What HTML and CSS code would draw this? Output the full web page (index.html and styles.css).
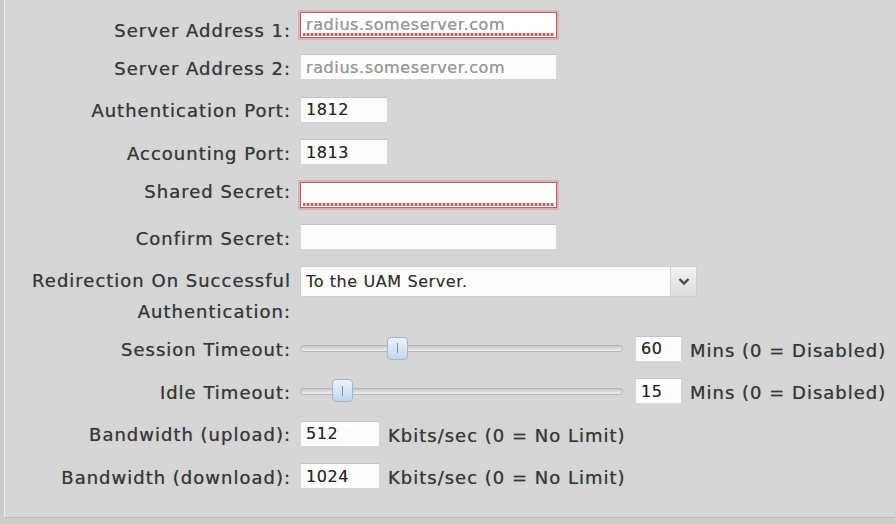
FILE: index.html
```html
<!DOCTYPE html>
<html lang="en">
<head>
  <meta charset="UTF-8">
  <title>RADIUS Settings</title>
  <link rel="stylesheet" href="styles.css">
</head>
<body>

  <div class="panel">
    <form class="form">
      <!-- Servers -->
      <div class="row row-first">
        <label class="label" for="server1">Server Address 1:</label>
        <div class="control">
          <input class="field field-wide field-error" id="server1" type="text" placeholder="radius.someserver.com">
        </div>
      </div>
      <div class="row">
        <label class="label" for="server2">Server Address 2:</label>
        <div class="control">
          <input class="field field-wide" id="server2" type="text" placeholder="radius.someserver.com">
        </div>
      </div>

      <!-- Ports -->
      <div class="row">
        <label class="label" for="authPort">Authentication Port:</label>
        <div class="control">
          <input class="field field-port" id="authPort" type="text" value="1812">
        </div>
      </div>
      <div class="row">
        <label class="label" for="acctPort">Accounting Port:</label>
        <div class="control">
          <input class="field field-port" id="acctPort" type="text" value="1813">
        </div>
      </div>

      <!-- Secret -->
      <div class="row row-secret">
        <label class="label" for="secret">Shared Secret:</label>
        <div class="control">
          <input class="field field-wide field-error" id="secret" type="password">
        </div>
      </div>
      <div class="row">
        <label class="label" for="confirmSecret">Confirm Secret:</label>
        <div class="control">
          <input class="field field-wide" id="confirmSecret" type="password">
        </div>
      </div>

      <!-- Redirection -->
      <div class="row row-tall">
        <label class="label label-multi" for="redirect">Redirection On Successful<br>Authentication:</label>
        <div class="control">
          <div class="select">
            <select id="redirect">
              <option>To the UAM Server.</option>
              <option>To the original URL.</option>
            </select>
            <span class="select-arrow">
              <svg width="12" height="9" viewBox="0 0 12 9"><path d="M1.5 2 L6 6.5 L10.5 2" fill="none" stroke="#4a4a4a" stroke-width="2.4"/></svg>
            </span>
          </div>
        </div>
      </div>

      <!-- Timeouts -->
      <div class="row">
        <label class="label" for="sessionTimeout">Session Timeout:</label>
        <div class="control">
          <div class="slider">
            <div class="slider-track"></div>
            <div class="slider-thumb" style="left: 87px"></div>
          </div>
          <input class="field field-mins" id="sessionTimeout" type="text" value="60">
          <span class="unit">Mins (0 = Disabled)</span>
        </div>
      </div>
      <div class="row">
        <label class="label" for="idleTimeout">Idle Timeout:</label>
        <div class="control">
          <div class="slider">
            <div class="slider-track"></div>
            <div class="slider-thumb" style="left: 32px"></div>
          </div>
          <input class="field field-mins" id="idleTimeout" type="text" value="15">
          <span class="unit">Mins (0 = Disabled)</span>
        </div>
      </div>

      <!-- Bandwidth -->
      <div class="row">
        <label class="label" for="bwUp">Bandwidth (upload):</label>
        <div class="control">
          <input class="field field-bw" id="bwUp" type="text" value="512">
          <span class="unit">Kbits/sec (0 = No Limit)</span>
        </div>
      </div>
      <div class="row">
        <label class="label" for="bwDown">Bandwidth (download):</label>
        <div class="control">
          <input class="field field-bw" id="bwDown" type="text" value="1024">
          <span class="unit">Kbits/sec (0 = No Limit)</span>
        </div>
      </div>
    </form>
  </div>

</body>
</html>
```

FILE: styles.css
```css
html, body {
  margin: 0;
  height: 100%;
}
body {
  background: #cdcdcd;
  font-family: "DejaVu Sans", Verdana, sans-serif;
  color: #383838;
  overflow: hidden;
}
.panel {
  margin-left: 4px;
  background: #d6d6d6;
  border-left: 1px solid #ececec;
  border-bottom: 1px solid #bdbdbd;
  height: 518px;
  box-sizing: border-box;
}
.form {
  padding-top: 3.5px;
}
.row {
  display: grid;
  grid-template-columns: 286px 1fr;
  column-gap: 9px;
  align-items: center;
  height: 42.5px;
}
.row-tall {
  align-items: start;
  height: 69px;
  padding-top: 7.5px;
  box-sizing: border-box;
}
.label {
  text-align: right;
  font-size: 18px;
  letter-spacing: 1px;
  line-height: 22px;
  padding-top: 3px;
  white-space: nowrap;
  text-shadow: 0 0 0.7px rgba(40, 40, 40, 0.6);
}
.row-first .label {
  padding-top: 13px;
}
.row-secret .label {
  padding-top: 0;
  margin-top: -6px;
}
.label-multi {
  line-height: 31px;
  padding-top: 0;
  margin-top: -1px;
}
.control {
  display: flex;
  align-items: center;
}

/* text fields */
.field {
  box-sizing: border-box;
  height: 26px;
  border: 1px solid #d6d6d6;
  border-top-color: #c4c4c4;
  background: #fdfdfd;
  font-family: "DejaVu Sans", Verdana, sans-serif;
  font-size: 16px;
  letter-spacing: 0.6px;
  color: #262626;
  padding: 0 5px;
  outline: none;
  text-shadow: 0 0 0.6px rgba(30, 30, 30, 0.5);
}
.field::placeholder {
  color: #9a9a9a;
}
.field-wide {
  width: 257px;
}
.field-port {
  width: 88px;
}
.field-mins {
  width: 47px;
  margin-left: 12px;
}
.field-bw {
  width: 80px;
}
.field-error {
  border-color: #b06464;
  box-shadow: 0 0 0 2px rgba(226, 150, 150, 0.55);
  background-color: #fff;
  background-image: repeating-linear-gradient(90deg, #d55a5a 0 2px, #f0b8b8 2px 4px);
  background-size: calc(100% - 4px) 3px;
  background-position: 2px calc(100% - 1px);
  background-repeat: no-repeat;
}
.unit {
  font-size: 18px;
  letter-spacing: 1px;
  margin-left: 8px;
  padding-top: 3px;
  white-space: nowrap;
  text-shadow: 0 0 0.7px rgba(40, 40, 40, 0.6);
}

/* select */
.select {
  display: flex;
  width: 397px;
  height: 31px;
  box-sizing: border-box;
  border: 1px solid #cfcfcf;
  background: #fdfdfd;
}
.select select {
  flex: 1;
  appearance: none;
  -webkit-appearance: none;
  border: none;
  background: transparent;
  font-family: "DejaVu Sans", Verdana, sans-serif;
  font-size: 16px;
  letter-spacing: 0.6px;
  color: #333;
  padding-left: 5px;
  outline: none;
  text-shadow: 0 0 0.6px rgba(30, 30, 30, 0.5);
}
.select-arrow {
  width: 25px;
  display: flex;
  align-items: center;
  justify-content: center;
  border-left: 1px solid #d2d2d2;
  background: linear-gradient(#f3f3f3, #dcdcdc);
}

/* slider */
.slider {
  position: relative;
  width: 323px;
  height: 24px;
  display: flex;
  align-items: center;
}
.slider-track {
  width: 100%;
  height: 7px;
  box-sizing: border-box;
  border: 1px solid #b4b4b4;
  border-radius: 4px;
  background: linear-gradient(#c8c8c8, #eeeeee);
}
.slider-thumb {
  position: absolute;
  top: 0;
  width: 21px;
  height: 23px;
  box-sizing: border-box;
  border: 1px solid #a3b7d2;
  border-radius: 4px;
  background: linear-gradient(#edf3fb, #c3d5ec);
  display: flex;
  align-items: center;
  justify-content: center;
}
.slider-thumb::after {
  content: "";
  width: 1px;
  height: 10px;
  background: #7b94b9;
}
```
